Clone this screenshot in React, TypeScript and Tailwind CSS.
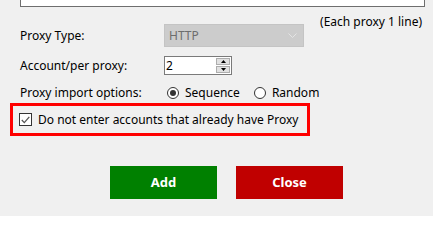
import React from "react";

const font = { fontFamily: '"Noto Sans", "Segoe UI", Arial, sans-serif' };

function Radio({ checked, label }: { checked: boolean; label: string }) {
  return (
    <label className="flex items-center gap-[6px]">
      <span className="flex h-[12px] w-[12px] items-center justify-center rounded-full border border-[#333333] bg-white">
        {checked && <span className="h-[6px] w-[6px] rounded-full bg-[#333333]" />}
      </span>
      <span>{label}</span>
    </label>
  );
}

export default function App() {
  return (
    <div className="relative h-[216px] w-[433px] overflow-hidden bg-[#f0f0f0] text-[12px] text-black" style={font}>
      {/* proxy list textarea, scrolled to the bottom */}
      <div className="-mt-[34px] ml-[20px] flex h-[41px] w-[405px] flex-col justify-end overflow-hidden border border-[#6e6e6e] bg-white pb-[3px] pl-[6px]">
        <div className="leading-[14px]">192.168.120.45:8080:user</div>
      </div>

      <div className="h-[17px] pr-[11px] pt-[7px] text-right leading-[15px]">(Each proxy 1 line)</div>

      <div className="ml-[20px] flex h-[23px] items-center">
        <span className="w-[144px]">Proxy Type:</span>
        <div className="flex h-[23px] w-[140px] items-center justify-between border border-[#c4c4c4] bg-[#cccccc] pl-[4px] pr-[6px] text-[#6d6d6d]">
          <span>HTTP</span>
          <svg width="9" height="6" viewBox="0 0 9 6" fill="none" stroke="#e4e4e4" strokeWidth="1">
            <path d="M0.5 0.5 L4.5 4.5 L8.5 0.5" />
          </svg>
        </div>
      </div>

      <div className="ml-[20px] mt-[9px] flex h-[19px] items-center">
        <span className="w-[144px]">Account/per proxy:</span>
        <div className="flex h-[19px] w-[68px] items-stretch border border-[#7a7a7a] bg-white">
          <span className="flex-1 pl-[1px] leading-[17px]">2</span>
          <div className="my-[1px] mr-[1px] flex w-[14px] flex-col gap-[1px]">
            <span className="flex flex-1 items-center justify-center border border-[#adadad] bg-[#e1e1e1]">
              <svg width="5" height="3" viewBox="0 0 5 3"><path d="M0 3 L2.5 0 L5 3 Z" fill="#000" /></svg>
            </span>
            <span className="flex flex-1 items-center justify-center border border-[#adadad] bg-[#e1e1e1]">
              <svg width="5" height="3" viewBox="0 0 5 3"><path d="M0 0 L2.5 3 L5 0 Z" fill="#000" /></svg>
            </span>
          </div>
        </div>
      </div>

      <div className="ml-[20px] mt-[11px] flex h-[14px] items-center">
        <span className="w-[147px]">Proxy import options:</span>
        <div className="flex items-center gap-[14px]">
          <Radio checked label="Sequence" />
          <Radio checked={false} label="Random" />
        </div>
      </div>

      <div className="ml-[10px] mt-[3px] flex h-[33px] w-[300px] items-center border-[3px] border-[#ff0000] pl-[6px]">
        <label className="flex items-center gap-[6px]">
          <span className="flex h-[13px] w-[13px] items-center justify-center border border-[#333333] bg-white">
            <svg width="9" height="8" viewBox="0 0 9 8" fill="none" stroke="#555555" strokeWidth="1.3">
              <path d="M0.8 4 L3.3 6.6 L8.3 0.8" />
            </svg>
          </span>
          <span>Do not enter accounts that already have Proxy</span>
        </label>
      </div>

      <div className="ml-[110px] mt-[30px] flex gap-[19px]">
        <button className="h-[33px] w-[107px] bg-[#008000] text-[13px] font-bold text-white">Add</button>
        <button className="h-[33px] w-[107px] bg-[#c00000] text-[13px] font-bold text-white">Close</button>
      </div>
    </div>
  );
}
